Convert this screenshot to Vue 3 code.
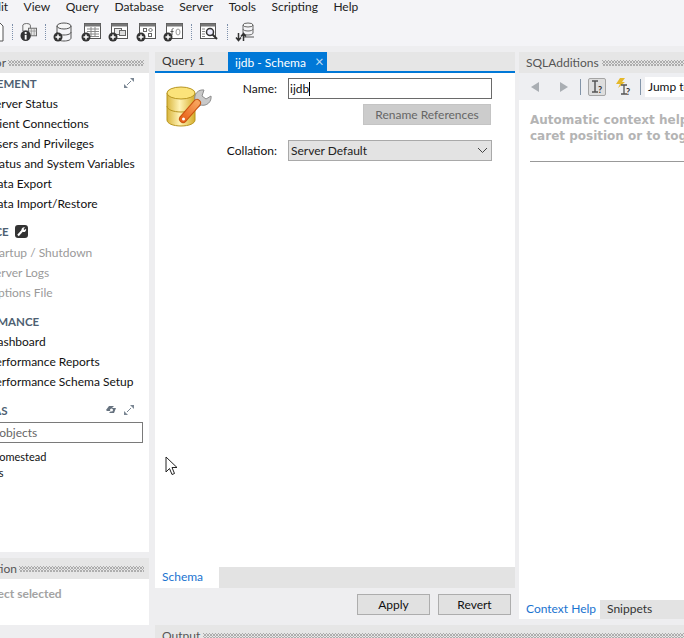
<script setup>
const menus = ['Edit', 'View', 'Query', 'Database', 'Server', 'Tools', 'Scripting', 'Help']

const management = ['Server Status', 'Client Connections', 'Users and Privileges', 'Status and System Variables', 'Data Export', 'Data Import/Restore']
const instance = ['Startup / Shutdown', 'Server Logs', 'Options File']
const performance = ['Dashboard', 'Performance Reports', 'Performance Schema Setup']
</script>

<template>
  <div class="app">
    <header class="top">
      <nav class="menubar">
        <span v-for="m in menus" :key="m" class="menu">{{ m }}</span>
      </nav>
      <div class="toolbar">
        <svg class="tb" width="4" height="20" viewBox="0 0 4 20"><path d="M-6 1h6l3 3v15h-9z" fill="#fff" stroke="#555" /></svg>
        <i class="sep"></i>
        <svg class="tb" width="17" height="20" viewBox="0 0 18 20">
          <ellipse cx="7" cy="3" rx="4" ry="2" fill="#f4f4f4" stroke="#666" />
          <path d="M3 3v6h8V3" fill="#f4f4f4" stroke="#666" />
          <rect x="9" y="6" width="8.500" height="8" fill="#e4e4e4" stroke="#666" />
          <path d="M9 9h9M12 6v8M15 6v8" stroke="#888" stroke-width=".7" />
          <circle cx="6" cy="14" r="5.500" fill="#333" />
          <rect x="5" y="13" width="2" height="5" fill="#fff" />
          <rect x="5" y="10" width="2" height="2" fill="#fff" />
        </svg>
        <i class="sep"></i>
        <svg class="tb add-icon" width="20" height="20" viewBox="0 0 20 20">
          <ellipse cx="11" cy="4" rx="7" ry="3" fill="#f6f6f6" stroke="#555" />
          <path d="M4 4v12c0 1.800 3 3 7 3s7-1.200 7-3V4M4 10c0 1.800 3 3 7 3s7-1.200 7-3" fill="none" stroke="#555" />
          <circle cx="5" cy="15" r="4.500" fill="#333" />
          <path d="M2.500 15h5M5 12.500v5" stroke="#fff" stroke-width="1.500" />
        </svg>
        <svg class="tb add-icon" width="20" height="20" viewBox="0 0 20 20">
          <rect x="3.500" y="1.500" width="16" height="15" fill="#fff" stroke="#555" />
          <rect x="3.500" y="1.500" width="16" height="3" fill="#777" />
          <path d="M6 7h12M6 9.500h12M6 12h12M6 14.500h12M10 5v10M14 5v10" stroke="#888" />
          <circle cx="5" cy="15" r="4.500" fill="#333" />
          <path d="M2.500 15h5M5 12.500v5" stroke="#fff" stroke-width="1.500" />
        </svg>
        <svg class="tb add-icon" width="20" height="20" viewBox="0 0 20 20">
          <rect x="3.500" y="1.500" width="16" height="15" fill="#fff" stroke="#555" />
          <rect x="3.500" y="1.500" width="16" height="3" fill="#777" />
          <rect x="6.500" y="6.500" width="7" height="6" fill="#eee" stroke="#666" />
          <rect x="11.500" y="8.500" width="6" height="5" fill="#ddd" stroke="#666" />
          <circle cx="5" cy="15" r="4.500" fill="#333" />
          <path d="M2.500 15h5M5 12.500v5" stroke="#fff" stroke-width="1.500" />
        </svg>
        <svg class="tb add-icon" width="20" height="20" viewBox="0 0 20 20">
          <rect x="3.500" y="1.500" width="16" height="15" fill="#fff" stroke="#555" />
          <rect x="3.500" y="1.500" width="16" height="3" fill="#777" />
          <rect x="7.500" y="6.500" width="3" height="3" fill="none" stroke="#666" />
          <path d="M14.500 6l2 2-2 2-2-2z" fill="none" stroke="#666" />
          <rect x="12.500" y="11.500" width="3" height="3" fill="none" stroke="#666" />
          <circle cx="5" cy="15" r="4.500" fill="#333" />
          <path d="M2.500 15h5M5 12.500v5" stroke="#fff" stroke-width="1.500" />
        </svg>
        <svg class="tb add-icon" width="20" height="20" viewBox="0 0 20 20">
          <rect x="3.500" y="1.500" width="16" height="15" fill="#fff" stroke="#555" />
          <rect x="3.500" y="1.500" width="16" height="3" fill="#777" />
          <path d="M9 13V8c0-1 .5-1.500 1.500-1.500M7.500 9.500h3" fill="none" stroke="#555" />
          <ellipse cx="15" cy="10" rx="2" ry="3" fill="none" stroke="#999" />
          <circle cx="5" cy="15" r="4.500" fill="#333" />
          <path d="M2.500 15h5M5 12.500v5" stroke="#fff" stroke-width="1.500" />
        </svg>
        <i class="sep"></i>
        <svg class="tb" width="20" height="20" viewBox="0 0 20 20">
          <rect x="1.500" y="1.500" width="15" height="15" fill="#fff" stroke="#555" />
          <rect x="1.500" y="1.500" width="15" height="3" fill="#777" />
          <path d="M3 7h3M3 9.500h3M3 12h3M3 14.500h3" stroke="#888" />
          <circle cx="11" cy="10" r="3.500" fill="#eef" stroke="#333" stroke-width="1.500" />
          <path d="M13.500 12.500l4.500 4.500" stroke="#333" stroke-width="2" />
        </svg>
        <i class="sep"></i>
        <svg class="tb" width="20" height="20" viewBox="0 0 20 20">
          <ellipse cx="13" cy="3" rx="5" ry="2" fill="#f6f6f6" stroke="#666" />
          <path d="M8 3v8c0 1 2 2 5 2s5-1 5-2V3M8 7c0 1 2 2 5 2s5-1 5-2" fill="none" stroke="#666" />
          <path d="M8 15h11" stroke="#555" />
          <path d="M3.500 11v7M1 15.500l2.500 3 2.500-3M8.500 19v-7M6 14.500l2.500-3 2.500 3" fill="none" stroke="#333" stroke-width="1.500" />
        </svg>
      </div>
    </header>

    <main class="main">
      <aside class="left">
        <div class="panel-head">
          <span class="head-title">Navigator</span>
          <i class="grip nav-grip"></i>
        </div>
        <div class="nav">
          <div class="nav-inner">
            <div class="sec-title">
              <span>MANAGEMENT</span>
              <svg class="expand" width="10" height="10" viewBox="0 0 10 10"><path d="M6 0h4v4zM0 10V6l4 4z" fill="#7b8794" /><path d="M7 3L3 7" stroke="#7b8794" /></svg>
            </div>
            <div v-for="item in management" :key="item" class="nav-item">{{ item }}</div>

            <div class="sec-title first-gap">
              <span>INSTANCE</span>
              <svg class="wrench" width="13" height="13" viewBox="0 0 13 13">
                <rect width="13" height="13" rx="3" fill="#333" />
                <path d="M3 10.500l4.500-5" stroke="#fff" stroke-width="2" />
                <path d="M6.500 5a2.500 2.500 0 0 1 3.500-2.500L8.500 4l1 1 1.500-1.300A2.500 2.500 0 0 1 8 7z" fill="#fff" />
              </svg>
            </div>
            <div v-for="item in instance" :key="item" class="nav-item off">{{ item }}</div>

            <div class="sec-title gap">
              <span>PERFORMANCE</span>
            </div>
            <div v-for="item in performance" :key="item" class="nav-item">{{ item }}</div>

            <div class="sec-title gap">
              <span>SCHEMAS</span>
              <svg class="refresh" width="13" height="10" viewBox="0 0 13 10"><path d="M1 5l3-4h5l-2 2h4L9 8H4l2-2H2z" fill="#66727f" /><circle cx="6.500" cy="5" r="1.500" fill="#fff" /></svg>
              <svg class="expand tight" width="10" height="10" viewBox="0 0 10 10"><path d="M6 0h4v4zM0 10V6l4 4z" fill="#7b8794" /><path d="M7 3L3 7" stroke="#7b8794" /></svg>
            </div>
            <div class="filter">Filter objects</div>
            <div class="tree">homestead</div>
            <div class="tree">es</div>
          </div>
        </div>
        <div class="gutter"></div>
        <div class="panel-head">
          <span class="head-title">Information</span>
          <i class="grip info-grip"></i>
        </div>
        <div class="info">
          <div class="info-text">No object selected</div>
        </div>
      </aside>

      <section class="center">
        <div class="tabs">
          <div class="tab">Query 1</div>
          <div class="tab active">ijdb - Schema <span class="tab-x">×</span></div>
        </div>
        <div class="editor">
          <svg class="schema-icon" width="47" height="43" viewBox="0 0 47 43">
            <defs>
              <linearGradient id="dbg" x1="0" x2="1" y1="0" y2="0">
                <stop offset="0" stop-color="#d9b53c" />
                <stop offset=".45" stop-color="#fff3b5" />
                <stop offset="1" stop-color="#d6ad2a" />
              </linearGradient>
              <linearGradient id="hnd" x1="0" x2="1" y1="1" y2="0">
                <stop offset="0" stop-color="#e8641b" />
                <stop offset="1" stop-color="#f7a35c" />
              </linearGradient>
            </defs>
            <path d="M1 7v27c0 3.500 6 6 14 6s14-2.500 14-6V7z" fill="url(#dbg)" stroke="#b8951f" />
            <path d="M1 20c0 3.500 6 6 14 6s14-2.500 14-6" fill="none" stroke="#b8951f" />
            <ellipse cx="15" cy="7" rx="14" ry="6" fill="#fbe37a" stroke="#b8951f" />
            <path d="M38 4a8 8 0 0 0-9 10l-2 3 4 5 4-3a8 8 0 0 0 10-9l-5 3-4-3z" fill="#c9c9c9" stroke="#8e8e8e" />
            <path d="M31 17L17 33" stroke="#c9530f" stroke-width="8" stroke-linecap="round" />
            <path d="M31 17L17 33" stroke="url(#hnd)" stroke-width="6" stroke-linecap="round" />
            <circle cx="17.500" cy="33" r="1.500" fill="#fff" />
          </svg>
          <form class="form">
            <label class="lbl">Name:</label>
            <div class="input"><span>ijdb</span><i class="caret"></i></div>
            <button type="button" class="btn rename">Rename References</button>
            <label class="lbl collation">Collation:</label>
            <div class="select collation">
              <span>Server Default</span>
              <svg width="11" height="7" viewBox="0 0 11 7"><path d="M1 1l4.500 4.500L10 1" fill="none" stroke="#444" /></svg>
            </div>
          </form>
        </div>
        <div class="sub-tabs">
          <div class="sub-tab">Schema</div>
        </div>
        <div class="actions">
          <button type="button" class="btn act">Apply</button>
          <button type="button" class="btn act">Revert</button>
        </div>
      </section>

      <aside class="right">
        <div class="panel-head">
          <span class="head-title">SQLAdditions</span>
          <i class="grip"></i>
        </div>
        <div class="help-bar">
          <svg width="10" height="10" viewBox="0 0 10 10" class="arrow"><path d="M9 0v10L1 5z" fill="#a9aeb3" /></svg>
          <svg width="10" height="10" viewBox="0 0 10 10" class="arrow next"><path d="M1 0v10l8-5z" fill="#a9aeb3" /></svg>
          <i class="vline"></i>
          <span class="help-btn">
            <svg width="16" height="16" viewBox="0 0 16 16"><path d="M3 2h6M3 13h6M6 2v11" fill="none" stroke="#555" stroke-width="1.500" /><text x="9" y="14" class="q">?</text></svg>
          </span>
          <svg class="bolt" width="16" height="18" viewBox="0 0 16 18"><path d="M5 0h5L7 4h3L3 10l2-4H1z" fill="#e5b82a" /><path d="M6 7h6M6 16h6M9 7v9" fill="none" stroke="#555" stroke-width="1.300" /><text x="11" y="17" class="q">?</text></svg>
          <i class="vline near"></i>
          <div class="jump">Jump to</div>
        </div>
        <div class="help-body">
          <p class="help-text">Automatic context help is disabled. Use the toolbar to manually get help for the current<br />caret position or to toggle automatic help.</p>
          <hr class="help-rule" />
        </div>
        <div class="help-tabs">
          <div class="ht active">Context Help</div>
          <div class="ht">Snippets</div>
        </div>
      </aside>
    </main>

    <div class="output">
      <span class="head-title">Output</span>
      <i class="grip"></i>
    </div>

    <svg class="cursor" width="13" height="20" viewBox="0 0 13 20"><path d="M1 1v15l3.500-3.500 2.500 6 2.500-1-2.500-6h5z" fill="#fff" stroke="#222" /></svg>
  </div>
</template>

<style>
html, body {
  margin: 0;
  background: #eeeef0;
}
</style>

<style scoped>
.app {
  position: relative;
  width: 684px;
  height: 638px;
  overflow: hidden;
  display: flex;
  flex-direction: column;
  background: #eeeef0;
  font-family: Lato, "Open Sans", sans-serif;
  font-size: 12px;
  color: #111;
}

.top {
  height: 46px;
  flex: none;
  background: #f4f4f7;
}

.menubar {
  display: flex;
  gap: 15.500px;
  height: 14px;
  margin-left: -12.500px;
  line-height: 13px;
  color: #222;
}

.toolbar {
  display: flex;
  align-items: center;
  height: 22px;
  margin-top: 7px;
  gap: 8px;
}

.tb {
  flex: none;
}

.add-icon {
  margin-right: -.5px;
}

.sep {
  flex: none;
  width: 1px;
  height: 16px;
  margin-right: -1px;
  border-left: 1px dotted #7d90ab;
  box-sizing: border-box;
}

.main {
  flex: none;
  height: 573px;
  margin-top: 6px;
  display: flex;
}

.left {
  width: 149px;
  flex: none;
  display: flex;
  flex-direction: column;
  overflow: hidden;
}

.panel-head {
  height: 21px;
  flex: none;
  display: flex;
  align-items: center;
  gap: 3px;
  background: #e6e6e6;
  color: #555;
  overflow: hidden;
  white-space: nowrap;
}

.left .panel-head {
  justify-content: flex-end;
  gap: 2px;
  padding-right: 5px;
}

.head-title {
  flex: none;
}

.grip {
  height: 6px;
  background-image:
    radial-gradient(circle at .5px .5px, #aaa .7px, transparent .8px),
    radial-gradient(circle at 2px 2px, #aaa .7px, transparent .8px);
  background-size: 3px 3px;
}

.nav-grip {
  width: 136px;
  flex: none;
}

.info-grip {
  width: 125px;
  flex: none;
}

.nav {
  height: 479px;
  flex: none;
  background: #fff;
  overflow: hidden;
}

.nav-inner {
  width: 192px;
  margin-left: -49px;
  padding-top: 1px;
  white-space: nowrap;
}

.sec-title {
  display: flex;
  align-items: center;
  height: 18px;
  margin-left: 2px;
  font-weight: 700;
  font-size: 11.500px;
  color: #4e5f72;
}

.sec-title.gap {
  margin-top: 9px;
}

.sec-title.first-gap {
  margin-top: 8px;
}

.expand {
  flex: none;
  margin-left: auto;
  margin-right: 9px;
}

.expand.tight {
  margin-left: 6px;
}

.wrench {
  flex: none;
  margin-left: 6px;
}

.refresh {
  flex: none;
  margin-left: auto;
}

.nav-item {
  height: 20px;
  line-height: 20px;
  margin-left: 37.500px;
}

.sec-title + .nav-item {
  margin-top: 2px;
}

.sec-title.first-gap + .nav-item {
  margin-top: 3px;
}

.nav-item.off {
  color: #9a9a9a;
}

.filter {
  height: 21px;
  box-sizing: border-box;
  line-height: 19px;
  margin-top: 3px;
  padding-left: 17px;
  border: 1px solid #7a7a7a;
  color: #666;
}

.tree {
  height: 16px;
  line-height: 16px;
  margin-left: 42px;
  font-size: 11px;
}

.filter + .tree {
  margin-top: 6px;
}

.gutter {
  height: 6px;
  flex: none;
}

.info {
  flex: 1;
  background: #fff;
  padding-top: 7px;
  overflow: hidden;
}

.info-text {
  margin-left: -38px;
  white-space: nowrap;
  font-weight: 700;
  color: #a3a3a3;
}

.center {
  width: 360px;
  flex: none;
  margin-left: 6px;
  display: flex;
  flex-direction: column;
}

.tabs {
  height: 19px;
  flex: none;
  display: flex;
  background: #e6e6e6;
  border-bottom: 2px solid #0078d7;
}

.tab {
  width: 73px;
  padding-left: 7px;
  box-sizing: border-box;
  line-height: 18px;
  color: #333;
}

.tab.active {
  width: 99px;
  background: #0078d7;
  color: #fff;
  white-space: nowrap;
}

.tab-x {
  margin-left: 6px;
  font-size: 15px;
  color: #bcdcf5;
}

.editor {
  height: 494px;
  flex: none;
  display: flex;
  align-items: flex-start;
  background: #fff;
}

.schema-icon {
  margin: 13px 0 0 11px;
  flex: none;
}

.form {
  display: grid;
  grid-template-columns: 65px 204px;
  column-gap: 10px;
  align-items: center;
  margin: 5px 0 0 0;
}

.lbl {
  padding-right: 1px;
  text-align: right;
}

.input {
  height: 21px;
  box-sizing: border-box;
  border: 1px solid #6a6a6a;
  display: flex;
  align-items: center;
  padding-left: 1px;
}

.caret {
  width: 1px;
  height: 14px;
  background: #000;
}

.btn {
  box-sizing: border-box;
  font: inherit;
  padding: 0;
}

.rename {
  grid-column: 2;
  justify-self: end;
  width: 128px;
  height: 21px;
  margin: 5px 1px 0 0;
  background: #ccc;
  border: 1px solid #c4c4c4;
  color: #666;
}

.lbl.collation {
  margin-top: 15px;
}

.select {
  height: 21px;
  box-sizing: border-box;
  border: 1px solid #a9a9a9;
  background: #e3e3e3;
  display: flex;
  align-items: center;
  justify-content: space-between;
  padding: 0 3px 0 2px;
  color: #222;
}

.select.collation {
  margin-top: 15px;
}

.sub-tabs {
  height: 21px;
  flex: none;
  background: #e3e3e3;
  display: flex;
}

.sub-tab {
  width: 64px;
  padding-left: 7px;
  box-sizing: border-box;
  background: #fff;
  color: #1a73d0;
  line-height: 20px;
}

.actions {
  display: flex;
  justify-content: flex-end;
  gap: 8px;
  padding: 6px 4px 0 0;
}

.act {
  width: 73px;
  height: 21px;
  background: #e1e1e1;
  border: 1px solid #adadad;
  color: #111;
}

.right {
  width: 165px;
  flex: none;
  margin-left: 4px;
  display: flex;
  flex-direction: column;
  overflow: hidden;
}

.right .panel-head {
  padding-left: 7px;
}

.right .grip {
  flex: 1;
}

.help-bar {
  height: 27px;
  flex: none;
  display: flex;
  align-items: center;
  background: #eeeff2;
  padding-left: 11px;
  white-space: nowrap;
}

.arrow {
  flex: none;
}

.arrow.next {
  margin-left: 19px;
}

.vline {
  flex: none;
  width: 1px;
  height: 16px;
  margin-left: 11px;
  background: #8294a8;
}

.vline.near {
  margin-left: 9px;
}

.help-btn {
  flex: none;
  box-sizing: border-box;
  width: 18px;
  height: 18px;
  margin-left: 7px;
  border: 1px solid #a5a5a5;
  border-radius: 2px;
  background: #dedede;
  display: flex;
  align-items: center;
  justify-content: center;
}

.bolt {
  flex: none;
  margin-left: 9px;
}

.q {
  font-size: 9px;
  font-weight: 700;
  fill: #333;
}

.jump {
  flex: none;
  width: 60px;
  height: 20px;
  line-height: 20px;
  margin-left: 4px;
  padding-left: 3px;
  background: #fff;
}

.help-body {
  height: 500px;
  flex: none;
  background: #fff;
  overflow: hidden;
}

.help-text {
  margin: 12px 0 0 11px;
  font-family: "DejaVu Sans", sans-serif;
  font-size: 12px;
  font-weight: 700;
  line-height: 16px;
  color: #b4b4b4;
  white-space: nowrap;
}

.help-rule {
  margin: 17px 0 0 11px;
  border: 0;
  border-top: 1px solid #999;
}

.help-tabs {
  height: 19px;
  flex: none;
  display: flex;
  background: #e3e3e3;
}

.ht {
  padding: 0 7px;
  line-height: 18px;
  color: #333;
}

.ht.active {
  width: 81px;
  padding: 0 0 0 7px;
  box-sizing: border-box;
  background: #fff;
  color: #1a73d0;
  white-space: nowrap;
}

.output {
  display: flex;
  align-items: center;
  gap: 3px;
  height: 21px;
  flex: none;
  margin: 0 0 0 155px;
  padding-left: 7px;
  background: #e6e6e6;
  color: #555;
}

.output .grip {
  flex: 1;
}

.cursor {
  position: absolute;
  left: 165px;
  top: 456px;
}
</style>
